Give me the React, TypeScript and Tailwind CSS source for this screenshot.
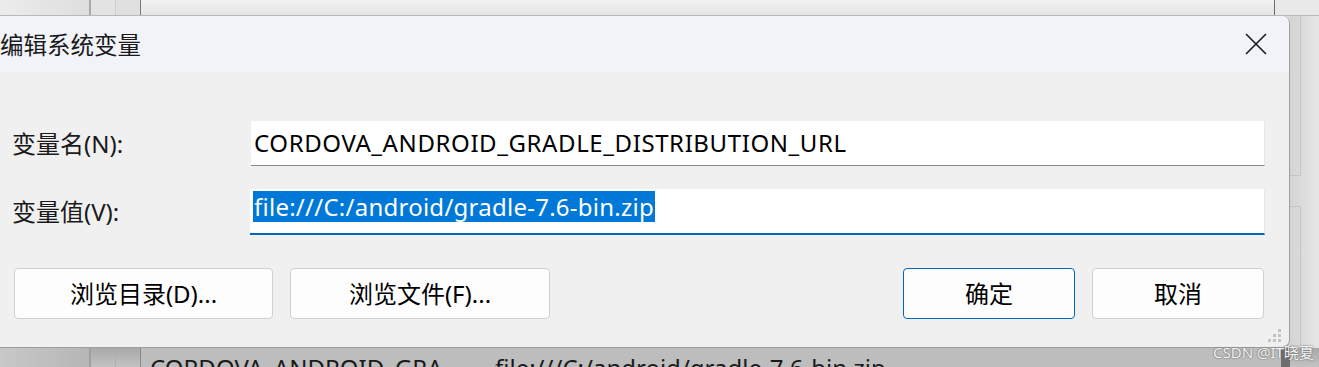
import React from "react";

const FONT = { fontFamily: '"Noto Sans", "Noto Sans CJK SC", sans-serif' };

function CloseIcon() {
  return (
    <svg width="22" height="22" viewBox="0 0 22 22" fill="none">
      <path d="M1 1 L21 21 M21 1 L1 21" stroke="#1a1a1a" strokeWidth="1.6" />
    </svg>
  );
}

function Btn({ children, primary, className }: { children: React.ReactNode; primary?: boolean; className: string }) {
  return (
    <button
      className={`h-[51px] rounded-[4px] bg-[#fdfdfd] text-[24px] text-black flex items-center justify-center ${
        primary ? "border border-[#0067c0]" : "border border-[#d0d0d0]"
      } ${className}`}
    >
      {children}
    </button>
  );
}

export default function App() {
  return (
    <div className="w-[1319px] h-[367px] overflow-hidden bg-[#dadada] flex flex-col relative" style={FONT}>
      {/* top strip of the window below */}
      <div className="h-[16px] flex shrink-0 bg-gradient-to-b from-[#f2f2f2] to-[#e4e4e4] border-b border-[#b8b8b8]">
        <div className="w-[91px] border-r-2 border-[#a9a9a9] bg-gradient-to-r from-[#ececec] to-[#dedede]" />
        <div className="w-[25px] border-r border-[#cfcfcf] bg-[#e3e3e3]" />
        <div className="w-[25px] border-r border-[#7a7a7a] bg-[#e0e0e0]" />
        <div className="flex-1" />
        <div className="w-[45px] border-l border-[#6a6a6a] bg-[#e9e9e9]" />
      </div>

      <div className="flex h-[332px] shrink-0">
        {/* dialog */}
        <div className="w-[1290px] h-full flex flex-col border-r border-b border-[#9e9e9e] rounded-tr-[8px] rounded-br-[8px] bg-[#f0f0f0] overflow-hidden">
          <div className="h-[56px] shrink-0 bg-[#f1f3f9] flex items-center justify-between pl-0 pr-[22px]">
            <span className="text-[23.5px] text-[#1a1a1a] leading-none pt-[1px]" style={{ fontFamily: '"Noto Sans CJK SC", sans-serif' }}>编辑系统变量</span>
            <CloseIcon />
          </div>
          <div className="flex-1 flex flex-col pt-[49px] pl-[12px] pr-[24px]">
            <div className="flex items-center h-[45px]">
              <div className="w-[239px] text-[24px] text-[#1a1a1a]">变量名(N):</div>
              <div className="flex-1 h-[45px] bg-white border-b border-[#868686] border-r border-r-[#e8e8e8] flex items-center pl-[3px] text-[24px] tracking-[0.6px] text-black">
                CORDOVA_ANDROID_GRADLE_DISTRIBUTION_URL
              </div>
            </div>
            <div className="flex items-center h-[46px] mt-[23px]">
              <div className="w-[238px] text-[24px] text-[#1a1a1a]">变量值(V):</div>
              <div className="flex-1 h-[46px] bg-white border-b-2 border-[#0067c0] border-r border-r-[#e0e8f0] flex items-start pt-[2px] pl-[3px]">
                <span className="bg-[#0078d7] text-white text-[24px] tracking-[0.25px] leading-[31px] h-[31px] px-[1px]">
                  file:///C:/android/gradle-7.6-bin.zip
                </span>
              </div>
            </div>
            <div className="flex mt-[33px] pl-[2px] pr-[1px]">
              <Btn className="w-[259px]">浏览目录(D)...</Btn>
              <Btn className="w-[260px] ml-[17px]">浏览文件(F)...</Btn>
              <div className="flex-1" />
              <Btn primary className="w-[172px]">确定</Btn>
              <Btn className="w-[172px] ml-[17px]">取消</Btn>
            </div>
          </div>
        </div>
        {/* right gutter */}
        <div className="flex-1 flex flex-col bg-gradient-to-r from-[#d4d4d4] to-[#e6e6e6]">
          <div className="h-[160px] w-[11px] border-r border-b border-[#c4c4c4]" />
          <div className="h-[30px]" />
          <div className="flex-1 w-[11px] border-r border-t border-[#c4c4c4]" />
        </div>
      </div>

      {/* bottom strip of window below */}
      <div className="flex-1 flex bg-gradient-to-b from-[#a9a9a9] to-[#c2c2c2] overflow-hidden">
        <div className="w-[91px] border-r-2 border-[#a0a0a0] bg-gradient-to-r from-[#c8c8c8] to-[#b6b6b6]" />
        <div className="w-[25px] border-r border-[#b0b0b0]" />
        <div className="w-[25px] border-r border-[#8a8a8a]" />
        <div className="flex-1 flex pl-[9px] pt-[8px] bg-[#bdbdbd] text-[24px] text-[#1a1a1a] leading-none whitespace-nowrap">
          <span className="w-[345px]">CORDOVA_ANDROID_GRA...</span>
          <span>file:///C:/android/gradle-7.6-bin.zip</span>
        </div>
        <div className="w-[9px] bg-[#6e6e6e] mr-[29px]" />
      </div>

      {/* resize grip */}
      <div className="absolute left-[1268px] top-[329px] grid grid-cols-3 gap-[2px]">
        <span className="w-[3px] h-[3px]" />
        <span className="w-[3px] h-[3px]" />
        <span className="w-[3px] h-[3px] bg-[#c4c4c4]" />
        <span className="w-[3px] h-[3px]" />
        <span className="w-[3px] h-[3px] bg-[#c4c4c4]" />
        <span className="w-[3px] h-[3px] bg-[#c4c4c4]" />
        <span className="w-[3px] h-[3px] bg-[#c4c4c4]" />
        <span className="w-[3px] h-[3px] bg-[#c4c4c4]" />
        <span className="w-[3px] h-[3px] bg-[#c4c4c4]" />
      </div>

      {/* watermark */}
      <div
        className="absolute left-[1213px] top-[341px] text-[15px] text-[#f4f4f4] whitespace-nowrap"
        style={{ textShadow: "0 0 2px #777, 0 0 1px #555" }}
      >
        CSDN @IT晓夏
      </div>
    </div>
  );
}
